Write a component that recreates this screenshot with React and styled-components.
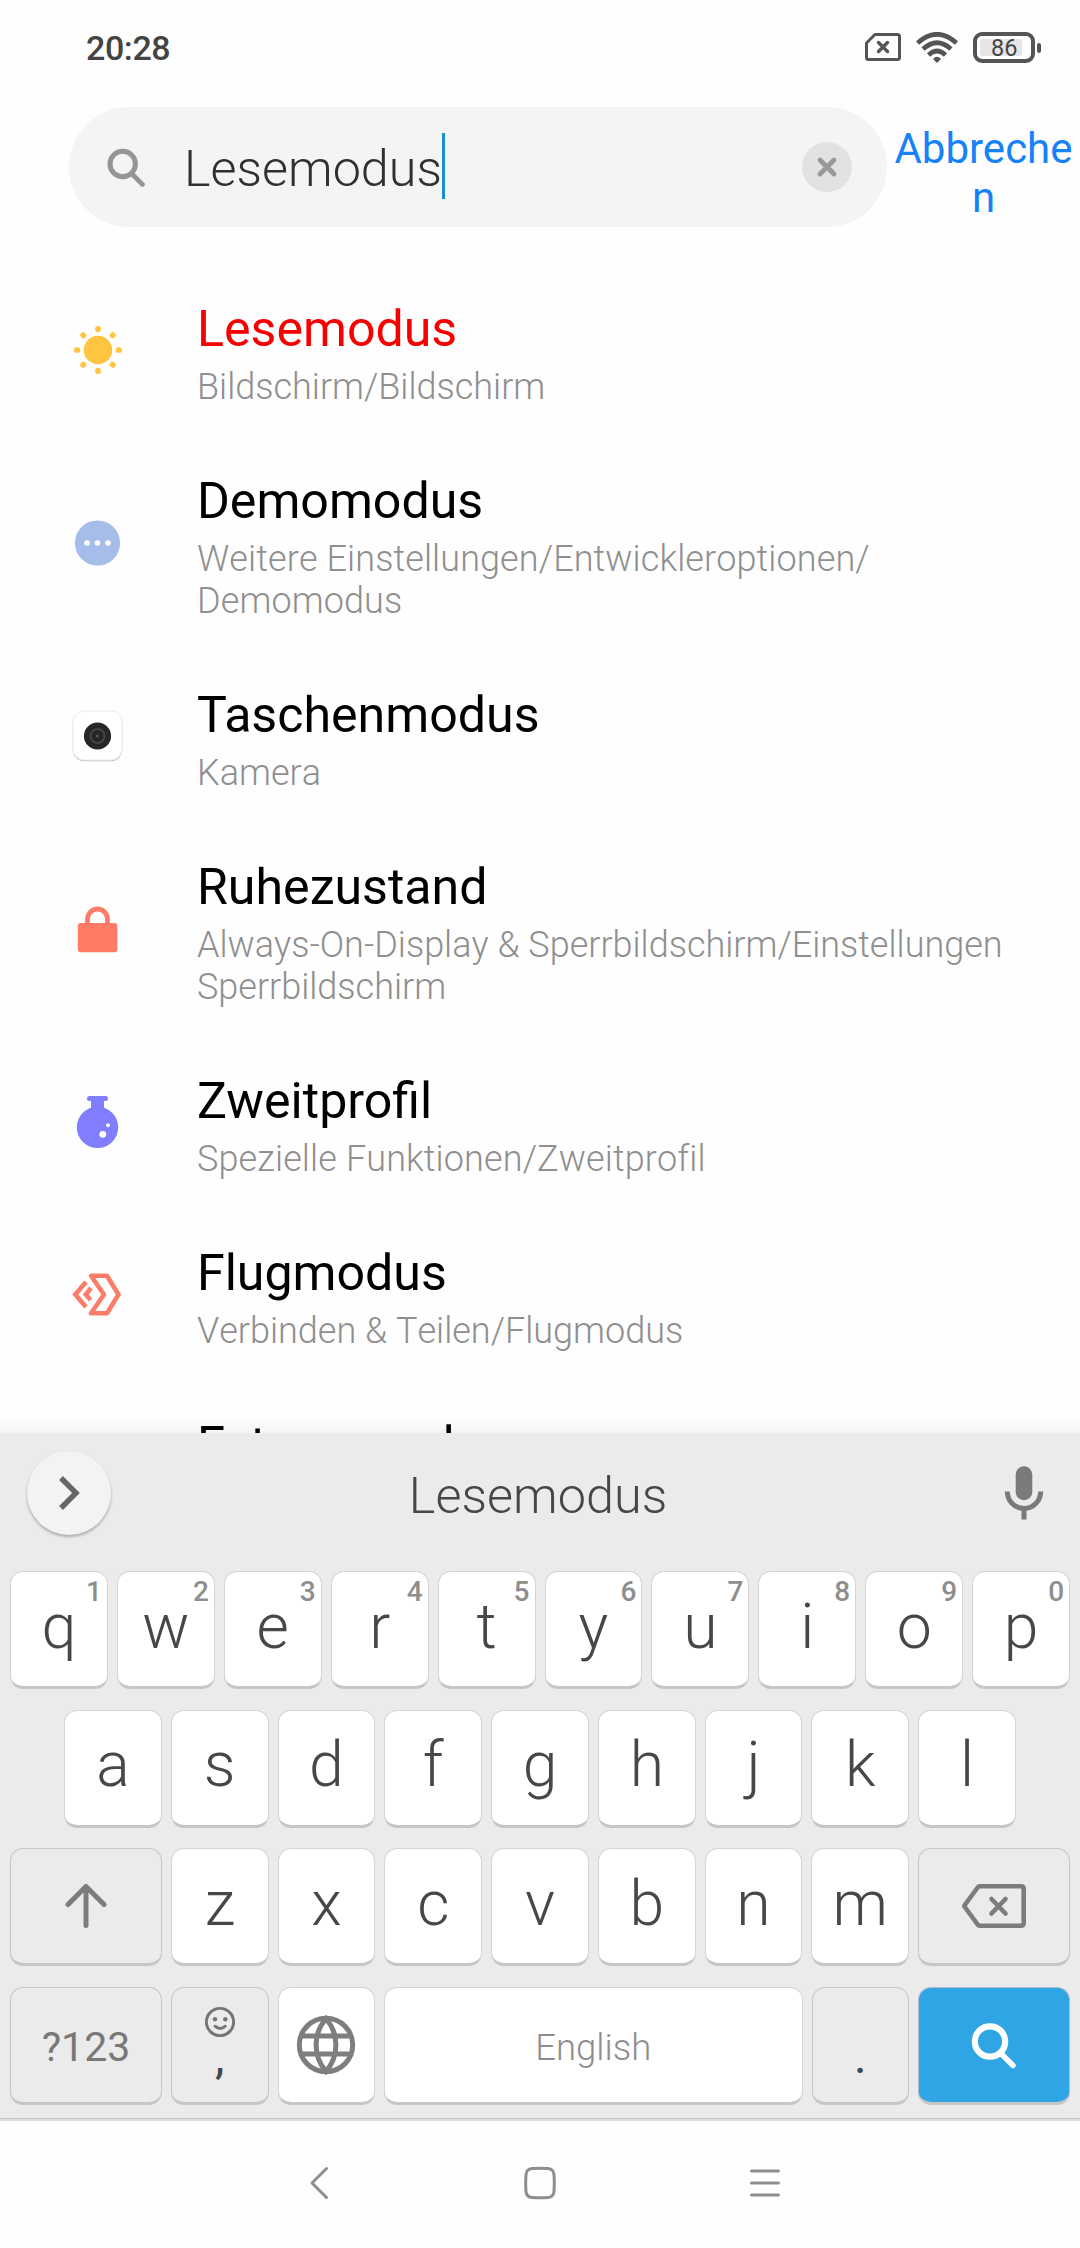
import styled, {createGlobalStyle} from "styled-components";

const GlobalStyle = createGlobalStyle`
  body{
    margin:0;
    background-color: #fefefe;
    font-family: Roboto, "Noto Sans", sans-serif;
  }
  *{
    box-sizing: border-box;
  }
`;

const Screen = styled.div`
  width: 1080px;
  height: 2248px;
  display: flex;
  flex-direction: column;
  overflow: hidden;
  background-color: #fefefe;
`;

const StatusBar = styled.header`
  height: 107px;
  padding: 28px 39px 0 86px;
  display: flex;
  align-items: flex-start;
  justify-content: space-between;
`;

const Clock = styled.div`
  font-size: 34px;
  line-height: 40px;
  font-weight: 500;
  letter-spacing: -0.4px;
  color: #444;
`;

const StatusIcons = styled.div`
  display: flex;
  gap: 15px;
  padding-top: 4px;
`;

const Battery = styled.div`
  display: flex;
  align-items: center;
  gap: 2px;
`;

const BatteryBody = styled.div`
  width: 62px;
  height: 31px;
  padding: 3px;
  border: 4px solid #555;
  border-radius: 9px;
`;

const BatteryLevel = styled.div`
  width: 42px;
  height: 17px;
  padding-left: 11px;
  border-radius: 2px;
  background-color: #e6e6e6;
  color: #444;
  font-size: 23.5px;
  line-height: 18px;
`;

const BatteryTip = styled.div`
  width: 4px;
  height: 10px;
  border-radius: 2px;
  background-color: #555;
`;

const SearchRow = styled.div`
  height: 120px;
  padding-left: 69px;
  display: flex;
`;

const SearchBox = styled.div`
  width: 818px;
  height: 120px;
  padding: 0 35px 0 38px;
  display: flex;
  align-items: center;
  border-radius: 60px;
  background-color: #f4f4f4;
`;

const Query = styled.div`
  flex: 1;
  margin-left: 37px;
  padding-top: 4px;
  display: flex;
  align-items: center;
  color: #303030;
  font-size: 50.3px;
  line-height: 60px;
  font-weight: 300;
`;

const Caret = styled.span`
  width: 3px;
  height: 66px;
  margin-top: -6px;
  background-color: #1a8fcf;
`;

const Cancel = styled.a`
  width: 193px;
  padding: 17px 4px 0;
  color: #1682f8;
  font-size: 42px;
  line-height: 49px;
  text-align: center;
  word-break: break-all;
`;

const Results = styled.main`
  position: relative;
  flex: 1;
  min-height: 0;
  padding-top: 37px;
  overflow: hidden;
  &::after{
    content: "";
    position: absolute;
    left: 0;
    right: 0;
    bottom: 0;
    height: 14px;
    background: linear-gradient(rgba(0,0,0,0), rgba(0,0,0,.045));
  }
`;

const Result = styled.div`
  padding: 36px 0 28px 72px;
  display: flex;
  align-items: center;
  gap: 74px;
  svg{
    flex: none;
    margin-top: -8px;
  }
`;

const Title = styled.div`
  font-size: 50.1px;
  line-height: 59px;
  color: ${props => props.$match ? '#f60000' : '#000'};
`;

const Path = styled.div`
  margin-top: 7px;
  font-size: 36px;
  line-height: 42px;
  font-weight: 300;
  font-kerning: none;
  letter-spacing: ${props => props.$tracking ? props.$tracking + 'px' : 'normal'};
  color: #8f8f8f;
  white-space: pre;
`;

const Keyboard = styled.section`
  height: 688px;
  display: flex;
  flex-direction: column;
  background-color: #ebebeb;
  border-bottom: 2px solid #dedede;
  box-shadow: inset 0 -1px 0 #c6c6c6;
`;

const Suggestions = styled.div`
  height: 138px;
  padding: 17px 36px 0 27px;
  display: flex;
  align-items: flex-start;
  justify-content: space-between;
`;

const ExpandButton = styled.div`
  width: 84px;
  height: 84px;
  margin-top: 1px;
  display: flex;
  align-items: center;
  justify-content: center;
  border-radius: 50%;
  background-color: #f3f3f3;
  box-shadow: 0 2px 3px rgba(0,0,0,.28);
`;

const Suggestion = styled.div`
  padding: 16px 0 0 5px;
  color: #474747;
  font-size: 50.4px;
  line-height: 60px;
  font-weight: 300;
`;

const MicWrapper = styled.div`
  width: 84px;
  padding: 16px 0 0 44px;
  svg{
    display: block;
  }
`;

const KeyRows = styled.div`
  display: flex;
  flex-direction: column;
  gap: 20.7px;
`;

const KeyRow = styled.div`
  display: flex;
  gap: 9px;
  padding: 0 ${props => props.$inset ? 64 : 10}px;
`;

const Key = styled.div`
  position: relative;
  flex: ${props => props.$wide ? '0 0 152px' : '1 1 0'};
  height: 118px;
  display: flex;
  flex-direction: column;
  align-items: center;
  justify-content: center;
  padding-bottom: 5px;
  border: 1px solid ${props => props.$dim ? '#c6c6c6' : '#d4d4d4'};
  border-bottom: 3px solid #c6c6c6;
  border-radius: 13px;
  background-color: ${props => props.$dim ? '#ebebeb' : '#fff'};
  color: #474747;
  font-size: 62.5px;
  line-height: 72px;
  font-weight: 300;
`;

const IconKey = styled(Key)`
  padding-bottom: 0;
`;

const SpaceKey = styled(Key)`
  flex: 0 0 418.5px;
  padding: 5px 0 0;
  font-size: 36.5px;
  color: #8e8e8e;
`;

const SearchKey = styled(Key)`
  padding: 1px 0 0;
  border-color: #aebfca;
  border-bottom-color: #c6c6c6;
  background-color: #30a5e6;
`;

const SymbolKey = styled(Key)`
  padding: 3px 0 0;
  font-size: 41px;
  font-weight: 400;
  color: #787878;
`;

const PunctuationKey = styled(Key)`
  justify-content: flex-end;
  padding-bottom: 22px;
  font-size: 48px;
  line-height: 46px;
  font-weight: 400;
  svg{
    margin-bottom: -4px;
  }
`;

const Hint = styled.span`
  position: absolute;
  top: 3px;
  right: 5px;
  color: #8e8e8e;
  font-size: 28px;
  line-height: 33px;
  font-weight: 500;
`;

const NavBar = styled.nav`
  height: 127px;
  padding: 0 299px 3px 302px;
  display: flex;
  align-items: center;
  justify-content: space-between;
`;

const HomeIcon = styled.svg`
  margin-right: 3px;
`;

function SimIcon() {
  return (
    <svg width="36" height="30" viewBox="0 0 36 30" fill="none" stroke="#555" strokeLinecap="round">
      <path d="M10 2.500H32.500Q34.500 2.500 34.500 4.500V25.500Q34.500 27.500 32.500 27.500H3.500Q1.500 27.500 1.500 25.500V11Z" strokeWidth="3" strokeLinejoin="round"/>
      <path d="M13.500 10.500L22.500 19.500M22.500 10.500L13.500 19.500" strokeWidth="3.400"/>
    </svg>
  );
}

function WifiIcon() {
  return (
    <svg width="42" height="31" viewBox="0 0 42 31" fill="none" stroke="#555" strokeWidth="4.600">
      <path d="M1.500 11Q21 -6.500 40.500 11"/>
      <path d="M7 17Q21 4.500 35 17"/>
      <path d="M12.500 23Q21 15 29.500 23"/>
      <path d="M17 27Q21 22.500 25 27L21 31Z" fill="#555" stroke="none"/>
    </svg>
  );
}

function SearchIcon() {
  return (
    <svg width="40" height="40" viewBox="0 0 40 40" fill="none" stroke="#959595" strokeLinecap="round">
      <circle cx="15.700" cy="17" r="12.700" strokeWidth="5"/>
      <path d="M26 28L35.500 37.500" strokeWidth="4.600"/>
    </svg>
  );
}

function ClearIcon() {
  return (
    <svg width="50" height="50" viewBox="0 0 50 50">
      <circle cx="25" cy="25" r="25" fill="#e2e2e2"/>
      <path d="M18 18L32 32M32 18L18 32" stroke="#999" strokeWidth="4.800" strokeLinecap="round"/>
    </svg>
  );
}

function SunIcon() {
  return (
    <svg width="51" height="50" viewBox="0 0 51 50">
      <circle cx="26" cy="25" r="14.200" fill="#ffc440"/>
      {[0,45,90,135,180,225,270,315].map(angle => (
        <rect key={angle} x="23.200" y="1" width="5.600" height="6.200" rx="2.600" fill="#ffc440" transform={`rotate(${angle} 26 25)`}/>
      ))}
    </svg>
  );
}

function MoreIcon() {
  return (
    <svg width="51" height="50" viewBox="0 0 51 50">
      <circle cx="25.500" cy="25" r="22.600" fill="#a6bce9"/>
      <circle cx="15" cy="25" r="2.800" fill="#fff"/>
      <circle cx="25.500" cy="25" r="2.800" fill="#fff"/>
      <circle cx="36" cy="25" r="2.800" fill="#fff"/>
    </svg>
  );
}

function CameraIcon() {
  return (
    <svg width="51" height="52" viewBox="0 0 51 52">
      <rect x="0.700" y="2" width="49.600" height="49.300" rx="11.500" fill="#c4c4c4"/>
      <rect x="1" y="1" width="49" height="49" rx="11" fill="#fff" stroke="#ebebeb"/>
      <circle cx="25.500" cy="26" r="13.600" fill="#262626"/>
      <circle cx="25.500" cy="26" r="7" fill="none" stroke="#444" strokeWidth="2"/>
      <circle cx="25.500" cy="26" r="1.500" fill="#555"/>
    </svg>
  );
}

function LockIcon() {
  return (
    <svg width="51" height="50" viewBox="0 0 51 50">
      <path d="M15.500 22V15A10 10 0 0 1 35.500 15V22" fill="none" stroke="#fb7d69" strokeWidth="4.800"/>
      <rect x="5.800" y="19" width="39.500" height="29.300" rx="3" fill="#ff7b66"/>
    </svg>
  );
}

function FlaskIcon() {
  return (
    <svg width="51" height="54" viewBox="0 0 51 54">
      <rect x="15" y="1" width="21" height="5" rx="2.500" fill="#807dff"/>
      <rect x="19" y="3" width="13" height="14" fill="#807dff"/>
      <circle cx="25.500" cy="32.300" r="20.700" fill="#807dff"/>
      <circle cx="30.800" cy="39.300" r="3.400" fill="#fff"/>
      <circle cx="36" cy="30.300" r="2" fill="#fff"/>
    </svg>
  );
}

function ShareIcon() {
  return (
    <svg width="51" height="50" viewBox="0 0 51 50" fill="none" stroke="#fb7d69" strokeWidth="4.600">
      <path d="M19 6.800H35L46.500 25.500L35 44.200H19L32 25.500Z" strokeLinejoin="round"/>
      <path d="M14 13L3.300 25.500L14 38"/>
      <path d="M19 19L13.800 25.500L18.500 31" strokeWidth="4.600"/>
    </svg>
  );
}

function EmptyIcon() {
  return <svg width="51" height="50" viewBox="0 0 51 50"/>;
}

function MicIcon() {
  return (
    <svg width="40" height="54" viewBox="0 0 40 54">
      <rect x="11.700" y="0.300" width="16.600" height="34" rx="8.300" fill="#7a7a7a"/>
      <path d="M3.300 25.500A16.700 17 0 0 0 36.700 25.500M20 42V53.500" fill="none" stroke="#7a7a7a" strokeWidth="5"/>
    </svg>
  );
}

function ShiftIcon() {
  return (
    <svg width="42" height="46" viewBox="0 0 42 46" fill="none" stroke="#7c7c7c" strokeWidth="5" strokeLinecap="round" strokeLinejoin="round">
      <path d="M21 3.500V42.500M3 21.500L21 3.500L39 21.500"/>
    </svg>
  );
}

function BackspaceIcon() {
  return (
    <svg width="66" height="46" viewBox="0 0 66 46" fill="none" stroke="#7c7c7c" strokeWidth="4.600" strokeLinecap="round" strokeLinejoin="round">
      <path d="M18.500 3.300H60Q62.700 3.300 62.700 6V40Q62.700 42.700 60 42.700H18.500Q17.500 42.700 17 42L3.800 24Q3 23 3.800 22L17 4Q17.500 3.300 18.500 3.300Z"/>
      <path d="M30.500 16L44.500 30.500M44.500 16L30.500 30.500"/>
    </svg>
  );
}

function SmileIcon() {
  return (
    <svg width="32" height="32" viewBox="0 0 32 32" fill="none" stroke="#757575" strokeWidth="2.900" strokeLinecap="round">
      <circle cx="16" cy="16" r="13.600"/>
      <circle cx="11" cy="13.200" r="2.200" fill="#757575" stroke="none"/>
      <circle cx="21.300" cy="13.200" r="2.200" fill="#757575" stroke="none"/>
      <path d="M11 20.200Q16 24.700 21.300 20.200"/>
    </svg>
  );
}

function GlobeIcon() {
  return (
    <svg width="60" height="60" viewBox="0 0 60 60" fill="none" stroke="#7e7e7e" strokeWidth="5">
      <circle cx="30" cy="30" r="26.700"/>
      <path d="M5 21H55M5 39H55M30 3.500C16.800 19 16.800 41 30 56.500C43.200 41 43.200 19 30 3.500Z"/>
    </svg>
  );
}

function FindIcon() {
  return (
    <svg width="46" height="48" viewBox="0 0 46 48" fill="none" stroke="#fff" strokeLinecap="round">
      <circle cx="19" cy="19.500" r="15.200" strokeWidth="6.200"/>
      <path d="M31 32.500L42 43.500" strokeWidth="5.400"/>
    </svg>
  );
}

const results = [
  {title:'Lesemodus', path:'Bildschirm/Bildschirm', Icon:SunIcon, match:true},
  {title:'Demomodus', path:'Weitere Einstellungen/Entwickleroptionen/\nDemomodus', Icon:MoreIcon, tracking:0.1},
  {title:'Taschenmodus', path:'Kamera', Icon:CameraIcon},
  {title:'Ruhezustand', path:'Always-On-Display & Sperrbildschirm/Einstellungen\nSperrbildschirm', Icon:LockIcon},
  {title:'Zweitprofil', path:'Spezielle Funktionen/Zweitprofil', Icon:FlaskIcon, tracking:0.12},
  {title:'Flugmodus', path:'Verbinden & Teilen/Flugmodus', Icon:ShareIcon},
  {title:'Extremmodus', path:'', Icon:EmptyIcon},
];

export default function App() {
  return (
    <>
      <GlobalStyle />
      <Screen>
        <StatusBar>
          <Clock>20:28</Clock>
          <StatusIcons>
            <SimIcon />
            <WifiIcon />
            <Battery>
              <BatteryBody>
                <BatteryLevel>86</BatteryLevel>
              </BatteryBody>
              <BatteryTip />
            </Battery>
          </StatusIcons>
        </StatusBar>
        <SearchRow>
          <SearchBox>
            <SearchIcon />
            <Query>Lesemodus<Caret /></Query>
            <ClearIcon />
          </SearchBox>
          <Cancel>Abbrechen</Cancel>
        </SearchRow>
        <Results>
          {results.map(({title,path,Icon,match,tracking}) => (
            <Result key={title}>
              <Icon />
              <div>
                <Title $match={match}>{title}</Title>
                <Path $tracking={tracking}>{path}</Path>
              </div>
            </Result>
          ))}
        </Results>
        <Keyboard>
          <Suggestions>
            <ExpandButton>
              <svg width="24" height="36" viewBox="0 0 24 36" fill="none" stroke="#666" strokeWidth="5.400">
                <path d="M4 3L19 18L4 33"/>
              </svg>
            </ExpandButton>
            <Suggestion>Lesemodus</Suggestion>
            <MicWrapper>
              <MicIcon />
            </MicWrapper>
          </Suggestions>
          <KeyRows>
            <KeyRow>
              {'qwertyuiop'.split('').map((letter,index) => (
                <Key key={letter}>
                  {letter}
                  <Hint>{(index + 1) % 10}</Hint>
                </Key>
              ))}
            </KeyRow>
            <KeyRow $inset>
              {'asdfghjkl'.split('').map(letter => (
                <Key key={letter}>{letter}</Key>
              ))}
            </KeyRow>
            <KeyRow>
              <IconKey $wide $dim><ShiftIcon /></IconKey>
              {'zxcvbnm'.split('').map(letter => (
                <Key key={letter}>{letter}</Key>
              ))}
              <IconKey $wide $dim><BackspaceIcon /></IconKey>
            </KeyRow>
            <KeyRow>
              <SymbolKey $wide $dim>?123</SymbolKey>
              <PunctuationKey $dim><SmileIcon />,</PunctuationKey>
              <IconKey><GlobeIcon /></IconKey>
              <SpaceKey>English</SpaceKey>
              <PunctuationKey $dim>.</PunctuationKey>
              <SearchKey $wide><FindIcon /></SearchKey>
            </KeyRow>
          </KeyRows>
        </Keyboard>
        <NavBar>
          <svg width="32" height="34" viewBox="0 0 32 34" fill="none" stroke="#8e8e8e" strokeWidth="3" strokeLinecap="round" strokeLinejoin="round">
            <path d="M24.500 2.500L10 17L24.500 31.500"/>
          </svg>
          <HomeIcon width="32" height="34" viewBox="0 0 32 34" fill="none" stroke="#8e8e8e" strokeWidth="3">
            <path d="M8 2.500Q16 1.800 24 2.500Q29.500 3 30 8.500Q30.600 17 30 25.500Q29.500 31 24 31.500Q16 32.200 8 31.500Q2.500 31 2 25.500Q1.400 17 2 8.500Q2.500 3 8 2.500Z"/>
          </HomeIcon>
          <svg width="32" height="34" viewBox="0 0 32 34" fill="none" stroke="#8e8e8e" strokeWidth="3" strokeLinecap="round">
            <path d="M2.500 5H29.500M2.500 17H29.500M2.500 29H29.500"/>
          </svg>
        </NavBar>
      </Screen>
    </>
  );
}
